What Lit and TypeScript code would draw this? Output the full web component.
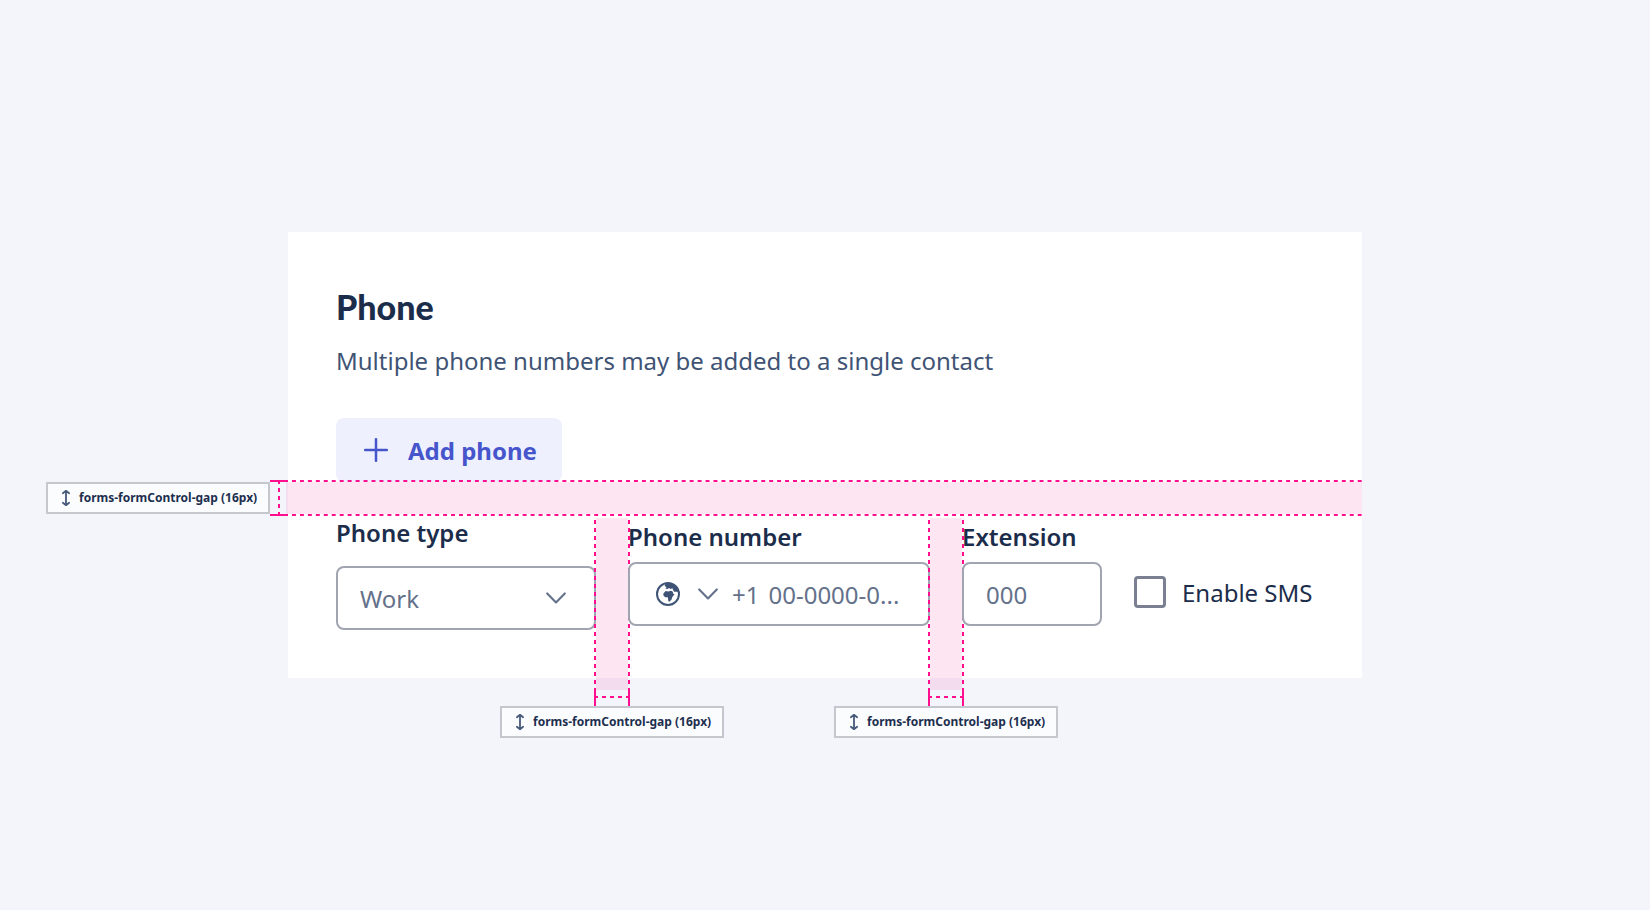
import { LitElement, html, css, svg } from "lit";
import { customElement } from "lit/decorators.js";

const chevron = svg`<path d="M1.2 1.4 L10 10.4 L18.8 1.4" fill="none" stroke="currentColor" stroke-width="2.1" stroke-linecap="round" stroke-linejoin="round"/>`;

/** Small bordered tag naming the spacing token. */
@customElement("token-tag")
class TokenTag extends LitElement {
  static styles = css`
    :host {
      display: flex;
      align-items: center;
      gap: 8px;
      box-sizing: border-box;
      width: 224px;
      height: 32px;
      padding: 0 0 0 13px;
      border: 2px solid #c5c7cf;
      background: #fbfcfe;
      color: #1d2f4f;
      font: bold 12px/16px "Noto Sans", sans-serif;
      white-space: nowrap;
    }
    .arrow {
      flex: none;
      color: #475a7c;
    }
  `;
  render() {
    return html`
      <svg class="arrow" width="10" height="18" viewBox="0 0 10 18" fill="none" stroke="currentColor"
        stroke-width="1.8" stroke-linecap="round" stroke-linejoin="round">
        <path d="M5 2 V16 M1.9 4.2 L5 1.8 L8.1 4.2 M1.9 13.8 L5 16.2 L8.1 13.8" />
      </svg>
      <span>forms-formControl-gap (16px)</span>
    `;
  }
}

@customElement("app-root")
class AppRoot extends LitElement {
  static styles = css`
    :host {
      --ink: #1b2d4b;
      --body: #3f5475;
      --muted: #64718a;
      --line: #a0a5b1;
      --pink: #ff0f90;
      --pink-soft: rgba(237, 0, 128, 0.1);
      display: grid;
      align-items: center;
      justify-items: center;
      min-height: 100vh;
      background: #f3f5fa;
      color: var(--ink);
      font: 24px/30px "Noto Sans", sans-serif;
    }
    * {
      box-sizing: border-box;
    }
    .card {
      width: 100%;
      max-width: 1074px;
      padding: 48px;
      background: #fff;
    }
    .title {
      margin: 0 0 10px;
      font: 900 34px/54px Lato, sans-serif;
    }
    .intro {
      margin: 0 0 40px;
      line-height: 34px;
      color: var(--body);
    }
    .add {
      display: flex;
      align-items: center;
      gap: 20px;
      height: 64px;
      padding: 0 25px 0 28px;
      border: 0;
      border-radius: 8px;
      background: #eef0fe;
      color: #4655cb;
      font: bold 24px/30px "Noto Sans", sans-serif;
    }
    .caption {
      padding-top: 2px;
    }

    .band {
      position: relative;
      height: 32px;
      margin: 0 -48px 0 -50px;
      background: var(--pink-soft);
    }
    .band-line {
      position: absolute;
      left: 2px;
      right: 0;
      height: 2px;
      background: linear-gradient(90deg, transparent 50%, var(--pink) 50%) 0 0 / calc(100% / 135) 2px;
    }
    .band-line.top {
      top: -2px;
    }
    .band-line.bottom {
      bottom: -2px;
    }
    .bracket-left {
      position: absolute;
      right: calc(100% - 2px);
      top: -2px;
      bottom: -2px;
      width: 18px;
      border: solid var(--pink);
      border-width: 2px 0;
      background: repeating-linear-gradient(var(--pink) 0 2px, transparent 2px 6px, var(--pink) 6px 8px) 8px 0 / 2px 100% no-repeat;
    }
    .tag-left {
      position: absolute;
      top: 0;
      right: calc(100% + 16px);
    }

    .fields {
      display: grid;
      grid-template-columns: 260fr 302fr 140fr 180fr;
      align-items: center;
      gap: 32px;
      padding-top: 4px;
    }
    .field {
      position: relative;
      display: flex;
      flex-direction: column;
      gap: 10px;
      min-width: 0;
    }
    .field.roomy {
      gap: 18px;
    }
    .label {
      font-weight: 600;
    }
    .box {
      position: relative;
      display: flex;
      align-items: center;
      width: 100%;
      height: 64px;
      border: 2px solid var(--line);
      border-radius: 8px;
      background: #fff;
      color: var(--muted);
    }
    .control {
      width: 100%;
      min-width: 0;
      height: 100%;
      padding: 0 22px;
      border: 0;
      outline: 0;
      appearance: none;
      background: none;
      color: var(--muted);
      font: 24px/30px "Noto Sans", sans-serif;
    }
    .control.select {
      padding-top: 2px;
    }
    .control::placeholder {
      color: var(--muted);
      opacity: 1;
    }
    .select-icon {
      position: absolute;
      right: 28px;
      pointer-events: none;
    }
    .phone {
      padding-left: 26px;
    }
    .country {
      display: flex;
      flex: none;
      align-items: center;
      gap: 18px;
      padding: 0;
      border: 0;
      background: none;
      color: var(--muted);
    }
    .globe {
      color: var(--body);
    }
    .prefix {
      flex: none;
      padding-left: 14px;
    }
    .phone .control {
      padding: 0 0 0 9px;
    }

    .check {
      display: flex;
      align-items: center;
      gap: 16px;
      padding-top: 36px;
      white-space: nowrap;
    }
    .tick {
      flex: none;
      appearance: none;
      width: 32px;
      height: 32px;
      margin: 0;
      border: 3px solid #7a7f92;
      border-radius: 4px;
      background: #fff;
    }

    .gap {
      position: absolute;
      left: calc(100% - 2px);
      top: -4px;
      width: 36px;
      height: 192px;
      pointer-events: none;
    }
    .roomy .gap {
      top: 0;
    }
    .gap-fill {
      height: 172px;
      margin: 0 2px;
      background: var(--pink-soft);
    }
    .gap-line {
      position: absolute;
      top: 0;
      width: 2px;
      height: 170px;
      background: repeating-linear-gradient(0deg, transparent 0 4px, var(--pink) 4px 8px);
    }
    .gap-line.start {
      left: 0;
    }
    .gap-line.end {
      right: 0;
    }
    .bracket-down {
      position: absolute;
      left: 0;
      right: 0;
      top: 170px;
      height: 18px;
      border: solid var(--pink);
      border-width: 0 2px;
      background: repeating-linear-gradient(90deg, var(--pink) 0 2px, transparent 2px 6px, var(--pink) 6px 8px) 0 8px / 100% 2px no-repeat;
    }
    .tag-down {
      position: absolute;
      top: 188px;
      left: -94px;
    }
  `;

  private gap() {
    return html`<div class="gap">
      <div class="gap-fill"></div>
      <div class="gap-line start"></div>
      <div class="gap-line end"></div>
      <div class="bracket-down"></div>
      <token-tag class="tag-down"></token-tag>
    </div>`;
  }

  render() {
    return html`
      <main class="card">
        <h1 class="title">Phone</h1>
        <p class="intro">Multiple phone numbers may be added to a single contact</p>
        <button class="add" type="button">
          <svg width="24" height="24" viewBox="0 0 24 24" stroke="currentColor" stroke-width="2.5" stroke-linecap="round">
            <path d="M12 1.2 V22.8 M1.2 12 H22.8" />
          </svg>
          <span class="caption">Add phone</span>
        </button>

        <div class="band">
          <div class="band-line top"></div>
          <div class="band-line bottom"></div>
          <div class="bracket-left"></div>
          <token-tag class="tag-left"></token-tag>
        </div>

        <form class="fields">
          <div class="field roomy">
            <label class="label" for="type">Phone type</label>
            <div class="box">
              <select class="control select" id="type">
                <option>Work</option>
              </select>
              <svg class="select-icon" width="20" height="12" viewBox="0 0 20 12">${chevron}</svg>
            </div>
            ${this.gap()}
          </div>

          <div class="field">
            <label class="label" for="number">Phone number</label>
            <div class="box phone">
              <button class="country" type="button" aria-label="Country">
                <svg class="globe" width="24" height="24" viewBox="0 0 24 24">
                  <circle cx="12" cy="12" r="11" fill="none" stroke="currentColor" stroke-width="2" />
                  <path fill="currentColor" d="M9.5 1.5 C14 .8 19 2.5 21.5 6.5 L22.8 9.8 L18.2 9.8 L17.2 8.2 L16.4 6.2 L14.6 7 L13 6 L11.6 7 L9.2 6.6 L10.6 5.2 L8.6 4 Z" />
                  <path fill="currentColor" d="M9.6 9 L12 9.6 L15 8.8 L16.6 9.6 L17.4 12 H18.6 L16.2 15.2 L15.6 17.6 L13.6 19.6 H12.4 L11.8 15.2 H9.2 L7.4 13.6 V11.4 Z" />
                </svg>
                <svg width="20" height="12" viewBox="0 0 20 12">${chevron}</svg>
              </button>
              <span class="prefix caption">+1</span>
              <input class="control" id="number" type="tel" placeholder="00-0000-0..." />
            </div>
            ${this.gap()}
          </div>

          <div class="field">
            <label class="label" for="ext">Extension</label>
            <div class="box">
              <input class="control" id="ext" type="text" placeholder="000" />
            </div>
          </div>

          <label class="check"><input class="tick" type="checkbox" /><span class="caption">Enable SMS</span></label>
        </form>
      </main>
    `;
  }
}
